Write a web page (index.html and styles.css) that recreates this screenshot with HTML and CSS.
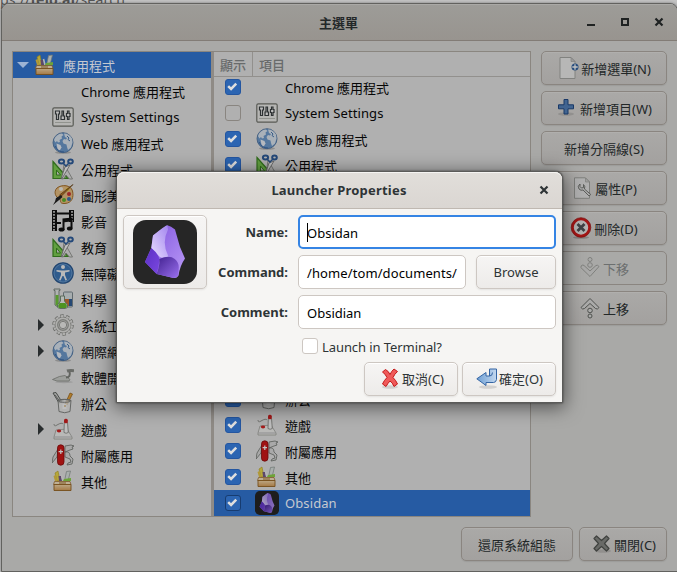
FILE: index.html
```html
<!DOCTYPE html>
<html lang="zh-Hant">
<head>
<meta charset="utf-8">
<title>主選單</title>
<link rel="stylesheet" href="styles.css">
</head>
<body>
<svg class="defs" width="0" height="0">
  <defs>
    <linearGradient id="gGlobe" x1="0" y1="0" x2="0" y2="1"><stop offset="0" stop-color="#f0f5fb"/><stop offset="1" stop-color="#5b90cc"/></linearGradient>
    <linearGradient id="gWood" x1="0" y1="0" x2="0" y2="1"><stop offset="0" stop-color="#f7dcb0"/><stop offset="1" stop-color="#d9a05a"/></linearGradient>
    <linearGradient id="gA" x1="0" y1="1" x2="1" y2="0"><stop offset="0" stop-color="#e8dcff"/><stop offset="1" stop-color="#a184ee"/></linearGradient>
    <linearGradient id="gB" x1="0" y1="0" x2="1" y2="1"><stop offset="0" stop-color="#7d50dc"/><stop offset="1" stop-color="#bb9cf7"/></linearGradient>
    <linearGradient id="gC" x1="0" y1="0" x2="1" y2="1"><stop offset="0" stop-color="#5b2fc4"/><stop offset="1" stop-color="#7a48e0"/></linearGradient>
    <linearGradient id="gD" x1="0" y1="0" x2="1" y2="1"><stop offset="0" stop-color="#41208f"/><stop offset="1" stop-color="#9a70ee"/></linearGradient>
    <linearGradient id="gRet" x1="0" y1="0" x2="1" y2="0"><stop offset="0" stop-color="#6f9fd4"/><stop offset="1" stop-color="#c3d8ef"/></linearGradient>
  </defs>
  <symbol id="toolbox" viewBox="0 0 22 22">
    <path d="M3 3l3-2 2 10H5z" fill="#f0dc4a" stroke="#b9a322" stroke-width=".6"/>
    <path d="M1.500 6l2-1 2 6H3z" fill="#e9c94a"/>
    <path d="M6.500 6h2.500l1 5H7z" fill="#7a5f8c"/><path d="M9.500 5l1.500 6" stroke="#eee" stroke-width="1.500"/>
    <path d="M14.500 1.500l4-.5-2.500 10h-3.500z" fill="#dfe6e3" stroke="#8e9a95" stroke-width=".7"/>
    <path d="M12 9l7-1v3h-8z" fill="#8fd64a"/>
    <path d="M2.500 11.500h15.500l1 3H1.500z" fill="#fae6c4" stroke="#a87632" stroke-width=".8"/>
    <path d="M2 14.500h17v6H2z" fill="url(#gWood)" stroke="#9a6624" stroke-width=".9"/>
    <path d="M7 13h7" stroke="#a87632"/>
  </symbol>
  <symbol id="settings" viewBox="0 0 22 22">
    <rect x=".8" y="1.800" width="20.400" height="18.400" rx="1.500" fill="#efefed" stroke="#74766f" stroke-width="1.200"/>
    <path d="M3 16.500h16" stroke="#bfc1bb"/>
    <g fill="#fafafa" stroke="#3d4244" stroke-width="1.200"><path d="M3.500 5h4v3h-1v5.500h-2V8h-1z"/><path d="M10 5h1.500v5h1v3.500H9V10h1z"/><path d="M15.500 5H17v2.500h1v3h-1v3h-1.500v-3h-1v-3h1z"/></g>
  </symbol>
  <symbol id="globe" viewBox="0 0 22 22">
    <ellipse cx="11" cy="20.500" rx="8" ry="1.300" fill="#000" opacity=".2"/>
    <circle cx="11" cy="10.700" r="10" fill="#6f9dd0" stroke="#5478a5" stroke-width=".9"/>
    <path d="M2 8Q4 2 10 1.500l1.500 1.500-2 1.500L10 6.500 7.500 8 8 10l-2 .5L5 9 3.500 10.500zM12 1.500q5 0 8 5l.5 4-1.500 5-3 2.500-1-3-.5-2.500-3-1L10.500 9l1.500-2 2 .5 1-1.500-2-1z" fill="#dfe9f4"/>
    <path d="M4.500 11.500l4 1.500 1 2.500-2 3.500-2-2z" fill="#eef4fb"/>
    <path d="M15 4l2 2-1 1.500 2 1.500" stroke="#4a79b2" fill="none"/><path d="M3 14q3 6 9 6" stroke="#3c6cab" fill="none"/>
  </symbol>
  <symbol id="utils" viewBox="0 0 22 22">
    <path d="M1 3.500L16 20.500H1z" fill="#7fd154" stroke="#3f8e24" stroke-width="1.200"/>
    <path d="M4.500 12l4 5h-4z" fill="#e0e0de" stroke="#3f8e24"/>
    <path d="M12 6l8.500 15h-3L14 17l-2 3.500-2 .5z" fill="#e5e5e3" stroke="#888a85" stroke-width=".8"/>
    <path d="M18 7l-8 13.500-1 .3L13 9z" fill="#fafafa" stroke="#777" stroke-width=".8"/>
    <g fill="none" stroke="#2f5f9f" stroke-width="2"><ellipse cx="9.500" cy="3.500" rx="2.600" ry="2"/><ellipse cx="18.500" cy="3.500" rx="2.300" ry="2"/></g>
    <path d="M11 5l3 3 3-3" stroke="#2f5f9f" stroke-width="1.500" fill="none"/>
  </symbol>
  <symbol id="palette" viewBox="0 0 22 22">
    <path d="M5 4c5-4 14-3 15.500 3S20 19 13 19.500s-3-4-6-5S1 8 5 4z" fill="#ecc183" stroke="#a8702a" stroke-width="1"/>
    <circle cx="9" cy="5" r="2" fill="#f5f3ec"/><circle cx="15.500" cy="5.500" r="1.800" fill="#f3d33c"/>
    <circle cx="17" cy="10" r="2" fill="#cf3434"/><circle cx="17" cy="15" r="2" fill="#3e77b6"/><circle cx="12" cy="16" r="2" fill="#60b52d"/>
    <path d="M21 .5L9 12.500 7.500 11z" fill="#bf7b28" stroke="#654111" stroke-width=".7"/>
    <path d="M9 11l1.500 2-4 3.500L1 21l2-3.500 1-3.500z" fill="#222"/>
  </symbol>
  <symbol id="film" viewBox="0 0 22 22">
    <path d="M0 0h5v21H0zM17 0h5v12h-5z" fill="#111"/>
    <path d="M2 1v21M20 1v12" stroke="#e6e6e6" stroke-width="1.600" stroke-dasharray="1.700 1.300"/>
    <path d="M5 3.500h12M5 13h4" stroke="#111" stroke-width="2"/>
    <path d="M10.500 8.500l10-1v11h-2v-7l-6 .8V20h-2z" fill="#111"/>
    <ellipse cx="9.500" cy="19.500" rx="3" ry="2" fill="#111"/><ellipse cx="17.700" cy="18.500" rx="2.800" ry="2" fill="#111"/>
  </symbol>
  <symbol id="access" viewBox="0 0 22 22">
    <circle cx="11" cy="11" r="10.200" fill="#3f79ba" stroke="#2c5b94" stroke-width="1.200"/><circle cx="11" cy="11" r="9" fill="none" stroke="#79a6d6" stroke-width=".7"/>
    <circle cx="11" cy="5" r="2" fill="#f4f4f4"/><path d="M4.500 8l5 .5h3l5-.5v1.500l-4.500 1V13l2 5-1.500.5L11.500 14h-1L8.500 18.500 7 18l2-5v-2.500l-4.500-1z" fill="#f4f4f4"/>
  </symbol>
  <symbol id="science" viewBox="0 0 22 22">
    <rect x="11.500" y="4" width="9" height="15" rx="1" fill="#dce3e6" stroke="#7f8b91"/>
    <path d="M12 11h8v7h-8z" fill="#ce7437"/><path d="M17 11h3v7h-3z" fill="#315f99"/>
    <path d="M2 1h6v1.500H7V17q-2 3-4 0V2.500H2z" fill="#e7ece9" stroke="#758078" stroke-width=".9"/>
    <path d="M3.600 7h2.900v10q-1.500 1.500-2.900 0z" fill="#74cb3d"/>
    <path d="M8.500 8h4v5l3 4q1 3-2 3.500h-6q-3-.5-2-3.500l3-4z" fill="#eff3ee" stroke="#6e8771" stroke-width=".9"/>
    <path d="M7.500 15h6l1.500 3-1 2H7l-1-2z" fill="#65c22b"/>
  </symbol>
  <symbol id="gear" viewBox="0 0 22 22">
    <circle cx="11" cy="11" r="9.300" fill="none" stroke="#82847f" stroke-width="2.800" stroke-dasharray="3.300 2.540"/>
    <circle cx="11" cy="11" r="8" fill="#e6e6e4" stroke="#8b8d88" stroke-width=".8"/>
    <circle cx="11" cy="11" r="8.900" fill="none" stroke="#e6e6e4" stroke-width="2.200" stroke-dasharray="2.500 3.090" stroke-dashoffset="-.4"/>
    <circle cx="11" cy="11" r="5.300" fill="none" stroke="#a4a6a1" stroke-width="1.400"/><circle cx="11" cy="11" r="3.700" fill="#f2f2f0" stroke="#8a8c87" stroke-width=".8"/>
  </symbol>
  <symbol id="trowel" viewBox="0 0 22 22">
    <ellipse cx="12" cy="16" rx="9" ry="1.200" fill="#000" opacity=".12"/>
    <path d="M.5 13.500Q8 9.500 13 9.500l5 4-1 1.500H5z" fill="#cfd1cd" stroke="#8c8f89" stroke-width=".8"/>
    <path d="M14 11.500q5 0 3.500-6" stroke="#80837d" stroke-width="2" fill="none"/><path d="M15 5q3-1 7-.3" stroke="#8a8d87" stroke-width="3" fill="none"/>
  </symbol>
  <symbol id="office" viewBox="0 0 22 22">
    <path d="M1 1l3-.5L10 10l-3 1z" fill="#d3d5d2" stroke="#5f6360"/><path d="M3 3l6 8" stroke="#777"/>
    <path d="M18 1l2.500 1L15 13l-2-1z" fill="#e9a43a" stroke="#945f16" stroke-width=".7"/>
    <path d="M6 8.500q7-2 13 0l-1 11q-5 2.500-11 0z" fill="#ececeb" fill-opacity=".75" stroke="#858784"/>
    <ellipse cx="12.500" cy="8.800" rx="6.300" ry="1.500" fill="none" stroke="#80827f"/>
    <rect x="10.500" y="12" width="4" height="5" fill="#fafafa"/><path d="M12 14h2" stroke="#c69b54"/>
  </symbol>
  <symbol id="joystick" viewBox="0 0 22 22">
    <path d="M4 12l11-1 5 8v2H2v-2z" fill="#f3f3f1" stroke="#a3a5a0" stroke-width=".8"/>
    <path d="M2 19h18" stroke="#bbb"/><ellipse cx="7" cy="13" rx="2.200" ry="1.400" fill="#d92424"/>
    <path d="M12.300 4.500h3.200l.8 10q-2.200 1.500-4.300 0z" fill="#fafafa" stroke="#858781" stroke-width=".8"/>
    <rect x="12" y=".8" width="3.800" height="4.500" rx="1.500" fill="#d32020"/>
    <path d="M2 6q0 3 3 1 5-3 6-1" fill="none" stroke="#8d8f8a" stroke-width=".9"/>
  </symbol>
  <symbol id="knife" viewBox="0 0 22 22">
    <path d="M6 5L1 13l-1 6 5-6zM13 2l6-1 3 1-2 1 1 2-3 1-5 2zM13 8q5-1 5 4l3 3-1 5-5 1 1-2 3-1-1-3-5-2z" fill="#dedfde" stroke="#747772" stroke-width=".8"/>
    <rect x="5.500" y=".8" width="6.500" height="20.400" rx="3.200" fill="#d31818" stroke="#8a0d0d" stroke-width=".8"/>
    <path d="M8.800 5.500v4.500M6.600 7.700h4.400" stroke="#fff" stroke-width="1.200"/>
  </symbol>
  <symbol id="obsidian" viewBox="0 0 64 64">
    <rect width="64" height="64" rx="13" fill="#262626"/>
    <path d="M34.300 5.200Q38 6 42 9.500L47 27l5 11.500q-5 7-6.500 17-2 3.500-6 2.300L24 54 12 42l6.300-14L20 15.500z" fill="url(#gB)"/>
    <path d="M34.300 5.200Q32 5.500 20 15.500L18.300 28q4 5 8.700 9 3 1.500 9 .5-8-14-1-28z" fill="url(#gA)"/>
    <path d="M18.300 28L12 42l11.500 12q3-8 2.800-15.500-2-6-8-10.500z" fill="url(#gC)"/>
    <path d="M26.300 39q10-4.500 15.500 0 4 3 4 8.500l-.5 7.800q-2 3.500-5.800 2.500L23.500 54q3.500-8 2.800-15z" fill="url(#gD)"/>
  </symbol>
  <symbol id="newdoc" viewBox="0 0 22 22">
    <path d="M3 .5h11l4 4v17H3z" fill="#f1f1f0" stroke="#aaaba7"/><path d="M14 .5v4h4z" fill="#ccc" stroke="#aaaba7" stroke-width=".7"/>
    <circle cx="18" cy="10" r="3.500" fill="#3465a4"/><path d="M18 7.300v5.400M15.300 10h5.400" stroke="#fff" stroke-width="1.300"/>
  </symbol>
  <symbol id="plus" viewBox="0 0 22 22">
    <ellipse cx="10" cy="17" rx="8" ry="1.800" fill="#000" opacity=".12"/>
    <path d="M8 2.500h4v5.300h5.500v4H12V17H8v-5.200H2.500v-4H8z" fill="#5583bd" stroke="#204a87"/>
  </symbol>
  <symbol id="props" viewBox="0 0 22 22">
    <path d="M3.500 .8h11l4 4v16.500h-15z" fill="#e8e8e7" stroke="#a6a7a3"/><path d="M14.500 1v4h4z" fill="#d2d2d0" stroke="#a6a7a3" stroke-width=".7"/>
    <path d="M9 7q-3 2-1 5 2 2 4 1l6 6 1.800-1.500L13.500 12q1-3-1-4.500v3l-2 .5-1.500-1.500z" fill="#dedfde" stroke="#6e706c" stroke-width=".9"/>
  </symbol>
  <symbol id="delete" viewBox="0 0 22 22">
    <ellipse cx="11" cy="20.500" rx="8" ry="1.300" fill="#000" opacity=".2"/>
    <circle cx="11" cy="10.500" r="8.500" fill="#ecebea" stroke="#d61c1c" stroke-width="2.600"/><circle cx="11" cy="10.500" r="9.800" fill="none" stroke="#a01010" stroke-width=".7"/>
    <path d="M7.500 7l7 7m0-7l-7 7" stroke="#53565a" stroke-width="2.800"/>
  </symbol>
  <symbol id="down" viewBox="0 0 22 22">
    <g fill="#e0e0de" stroke="#81837e"><circle cx="11" cy="2.500" r="2"/><circle cx="11" cy="8" r="2.300"/><path d="M2.500 8.500Q4 7.500 5 8.500l6 5.500 6-5.500q1.500-1 3 1L11 19.500 1.800 10.500z"/></g>
  </symbol>
  <symbol id="up" viewBox="0 0 22 22">
    <g fill="#e0e0de" stroke="#666965"><path d="M2 10.500L11 1.500l9 9q-1.500 2.500-3.500 1L11 6.500 5.500 11.500Q3.500 13 2 10.500z"/><circle cx="11" cy="13.500" r="2.300"/><circle cx="11" cy="19" r="2"/></g>
  </symbol>
  <symbol id="closex" viewBox="0 0 22 22">
    <ellipse cx="13" cy="18" rx="8" ry="1.800" fill="#000" opacity=".12"/>
    <path d="M6.500 3L11.500 7.500 16.500 3 19 5.500 14.500 10.500l4.500 5-2.500 2.500-5-4.500-5 4.500L4 15.500l4.500-5L4 5.500z" fill="#8a8c88" stroke="#555854" stroke-linejoin="round" stroke-width="1.200"/>
  </symbol>
  <symbol id="cancelx" viewBox="0 0 22 22">
    <ellipse cx="12" cy="19" rx="8" ry="1.800" fill="#000" opacity=".12"/>
    <path d="M7.500 1.500q3 1.500 4.500 5 1.500-3.500 4-5.500l3.500 2.500Q16.500 6 15 9.500q3 3 4.500 6.500l-3.500 2.500q-1.500-4-4-5.500-2 2-4 5.500L4.500 16q1.500-3.500 4.500-6.500Q7.500 6 4.500 4z" fill="#ef5a5a" stroke="#c41b1b" stroke-linejoin="round"/>
  </symbol>
  <symbol id="return" viewBox="0 0 22 22">
    <ellipse cx="13" cy="19" rx="9" ry="1.800" fill="#000" opacity=".12"/>
    <path d="M14.500 1h7v10.500q-.5 3-3 3H11v3L1.800 10.800 11 4.500v3.500h3.500z" fill="url(#gRet)" stroke="#3465a4" stroke-linejoin="round"/><path d="M14.500 8q3 0 3-3.500" fill="none" stroke="#3465a4"/>
  </symbol>
  <symbol id="check" viewBox="0 0 16 16"><path d="M2.500 7l3.300 3.200L11.700 4.200" fill="none" stroke="currentColor" stroke-width="2.900"/></symbol>
</svg>

<div class="backdrop">ps://<b>felo.ai</b>/search</div>

<main class="window">
  <header class="titlebar">
    <h1>主選單</h1>
    <svg class="controls" width="77" height="10" viewBox="0 0 77 10"><path d="M0 8h8" stroke="#1f2222" stroke-width="2"/><path d="M35 2h6v6h-6z" fill="none" stroke="#1f2222" stroke-width="2"/><path d="M68.500 1.500l7 7m0-7l-7 7" stroke="#1f2222" stroke-width="2.200"/></svg>
  </header>
  <div class="content">
    <div class="panes">
      <ul class="tree">
        <li class="root selected"><i class="open"></i><svg class="icon"><use href="#toolbox"/></svg><span>應用程式</span></li>
        <li><i></i><svg class="icon"></svg><span>Chrome 應用程式</span></li>
        <li><i></i><svg class="icon"><use href="#settings"/></svg><span class="latin">System Settings</span></li>
        <li><i></i><svg class="icon"><use href="#globe"/></svg><span>Web 應用程式</span></li>
        <li><i></i><svg class="icon"><use href="#utils"/></svg><span>公用程式</span></li>
        <li><i></i><svg class="icon"><use href="#palette"/></svg><span>圖形美術</span></li>
        <li><i></i><svg class="icon"><use href="#film"/></svg><span>影音</span></li>
        <li><i></i><svg class="icon"><use href="#utils"/></svg><span>教育</span></li>
        <li><i></i><svg class="icon"><use href="#access"/></svg><span>無障礙</span></li>
        <li><i></i><svg class="icon"><use href="#science"/></svg><span>科學</span></li>
        <li><i class="closed"></i><svg class="icon"><use href="#gear"/></svg><span>系統工具</span></li>
        <li><i class="closed"></i><svg class="icon"><use href="#globe"/></svg><span>網際網路</span></li>
        <li><i></i><svg class="icon"><use href="#trowel"/></svg><span>軟體開發</span></li>
        <li><i></i><svg class="icon"><use href="#office"/></svg><span>辦公</span></li>
        <li><i class="closed"></i><svg class="icon"><use href="#joystick"/></svg><span>遊戲</span></li>
        <li><i></i><svg class="icon"><use href="#knife"/></svg><span>附屬應用</span></li>
        <li><i></i><svg class="icon"><use href="#toolbox"/></svg><span>其他</span></li>
      </ul>
      <div class="items">
        <div class="columns"><span>顯示</span><span>項目</span></div>
        <ul>
          <li><svg class="box on"><use href="#check"/></svg><svg class="icon"></svg><span>Chrome 應用程式</span></li>
          <li><svg class="box"></svg><svg class="icon"><use href="#settings"/></svg><span class="latin">System Settings</span></li>
          <li><svg class="box on"><use href="#check"/></svg><svg class="icon"><use href="#globe"/></svg><span>Web 應用程式</span></li>
          <li><svg class="box on"><use href="#check"/></svg><svg class="icon"><use href="#utils"/></svg><span>公用程式</span></li>
          <li></li><li></li><li></li><li></li><li></li><li></li><li></li><li></li>
          <li><svg class="box on"><use href="#check"/></svg><svg class="icon"><use href="#office"/></svg><span>辦公</span></li>
          <li><svg class="box on"><use href="#check"/></svg><svg class="icon"><use href="#joystick"/></svg><span>遊戲</span></li>
          <li><svg class="box on"><use href="#check"/></svg><svg class="icon"><use href="#knife"/></svg><span>附屬應用</span></li>
          <li><svg class="box on"><use href="#check"/></svg><svg class="icon"><use href="#toolbox"/></svg><span>其他</span></li>
          <li class="selected"><svg class="box on"><use href="#check"/></svg><svg class="icon large"><use href="#obsidian"/></svg><span class="latin">Obsidan</span></li>
        </ul>
      </div>
    </div>
    <div class="actions">
      <button><svg class="icon"><use href="#newdoc"/></svg><span>新增選單(N)</span></button>
      <button><svg class="icon"><use href="#plus"/></svg><span>新增項目(W)</span></button>
      <button><span>新增分隔線(S)</span></button>
      <button><svg class="icon"><use href="#props"/></svg><span>屬性(P)</span></button>
      <button><svg class="icon"><use href="#delete"/></svg><span>刪除(D)</span></button>
      <button disabled><svg class="icon"><use href="#down"/></svg><span>下移</span></button>
      <button><svg class="icon"><use href="#up"/></svg><span>上移</span></button>
    </div>
  </div>
  <footer>
    <button class="restore"><span>還原系統組態</span></button>
    <button class="close"><svg class="icon"><use href="#closex"/></svg><span>關閉(C)</span></button>
  </footer>
</main>

<section class="dialog">
  <header><h2>Launcher Properties</h2><svg class="dismiss" width="10" height="10" viewBox="0 0 10 10"><path d="M1.500 1.500l7 7m0-7l-7 7" stroke="#2e3436" stroke-width="2.200"/></svg></header>
  <div class="form">
    <button class="launcher"><svg width="64" height="64"><use href="#obsidian"/></svg></button>
    <div class="fields">
      <div class="field"><label>Name:</label><div class="input focus"><i class="caret"></i>Obsidan</div></div>
      <div class="field"><label>Command:</label><div class="input path">/home/tom/documents/</div><button class="browse"><span class="latin">Browse</span></button></div>
      <div class="field"><label>Comment:</label><div class="input">Obsidian</div></div>
    </div>
  </div>
  <div class="terminal"><i class="tick"></i><span>Launch in Terminal?</span></div>
  <div class="confirm">
    <button><svg class="icon"><use href="#cancelx"/></svg><span>取消(C)</span></button>
    <button><svg class="icon"><use href="#return"/></svg><span>確定(O)</span></button>
  </div>
</section>
</body>
</html>
```
FILE: styles.css
```css
* { box-sizing: border-box; }
body {
  margin: 0;
  width: 677px;
  height: 572px;
  overflow: hidden;
  position: relative;
  background: #c3c3c3;
  font: 13px/20px "Noto Sans", "Noto Sans CJK TC", sans-serif;
  color: #060606;
}
ul { list-style: none; margin: 0; padding: 0; }
h1, h2 { margin: 0; font-size: 13px; font-weight: 700; }
li span, button span { padding-top: 2px; }
li span.latin { padding-top: 0; letter-spacing: .1px; }
button span.latin { padding-top: 0; }
.defs { position: absolute; }
.icon { width: 22px; height: 22px; flex: none; }
.backdrop {
  height: 3px;
  line-height: 0;
  font-size: 14px;
  letter-spacing: .2px;
  color: #555;
  white-space: nowrap;
}

.window {
  position: absolute;
  left: 1px;
  top: 3px;
  width: 677px;
  height: 569px;
  border: 1px solid #62625f;
  border-radius: 8px 8px 0 0;
  background: #a9a9a7;
  box-shadow: 0 0 3px rgba(0, 0, 0, .4);
  overflow: hidden;
}
.window .icon { filter: brightness(.76); }
.titlebar {
  height: 37px;
  display: flex;
  align-items: center;
  justify-content: center;
  position: relative;
  background: linear-gradient(#9d9c98, #98948f);
  border-bottom: 1px solid #827c76;
  box-shadow: inset 0 1px #aaa9a6;
}
.titlebar h1 { color: #242829; padding: 2px 2px 0 0; }
.controls { position: absolute; left: 585px; top: 13px; }
.content { display: flex; padding: 10px 0 0 10px; gap: 10px; }
.panes {
  display: flex;
  width: 519px;
  height: 466px;
  border: 1px solid #8a8680;
  background: #8f8b86;
  gap: 3px;
}
.tree { width: 198px; background: #b0b0b0; }
.tree li, .items li { height: 26px; display: flex; align-items: center; white-space: nowrap; }
.tree li i { width: 14px; height: 12px; margin: 0 1px 0 24px; flex: none; }
.tree li .icon { margin-right: 7px; }
.tree .root i { margin: 0 3px 0 4px; }
.tree i.open::before {
  content: "";
  display: block;
  margin-top: 3px;
  width: 0;
  border: 6px solid transparent;
  border-top-color: #9cb3d4;
  border-bottom: 0;
}
.tree i.closed::before {
  content: "";
  display: block;
  width: 0;
  margin-left: 1px;
  border: 6px solid transparent;
  border-left-color: #292d2e;
  border-right: 0;
}
.selected { background: #265ba3; color: #c5c9d0; }
.items { width: 316px; background: #b0b0b0; overflow: hidden; }
.columns {
  position: relative;
  height: 25px;
  display: flex;
  background: #b0b0b0;
  border-bottom: 1px solid #92908d;
  color: #686b6b;
  font-weight: 500;
  white-space: nowrap;
}
.columns span { padding: 3px 0 0 6px; }
.columns span:first-child { width: 39px; border-right: 1px solid #92908d; }
.items ul { margin-top: -3px; }
.box {
  width: 16px;
  height: 16px;
  margin: 0 15px 0 11px;
  border: 1px solid #898580;
  border-radius: 3px;
  flex: none;
  color: #dedede;
}
.box.on { background: #2c65b2; border-color: #2456a0; }
.selected .box.on { border-color: #173c70; }
.items li .icon { margin: 0 7px 0 0; }
.items li .icon.large { width: 24px; height: 24px; margin: 0 6px 0 -1px; }

button {
  font: inherit;
  height: 34px;
  padding: 0;
  display: flex;
  align-items: center;
  justify-content: center;
  gap: 2px;
  border: 1px solid #8a8580;
  border-radius: 5px;
  background: linear-gradient(#aaa9a7, #a3a19f);
  color: #222728;
  box-shadow: 0 1px 1px rgba(0, 0, 0, .08), inset 0 1px #b0afad;
  white-space: nowrap;
}
.actions { display: flex; flex-direction: column; gap: 6px; width: 126px; }
button:disabled { background: #a9a9a7; color: #6c6f6f; box-shadow: none; }
button:disabled .icon { opacity: .6; }
footer { display: flex; gap: 6px; padding: 10px 10px 0 459px; }
.restore { width: 112px; }
.close { width: 88px; }

.dialog {
  position: absolute;
  left: 116px;
  top: 171px;
  width: 447px;
  height: 232px;
  border: 1px solid #5b5b59;
  border-radius: 8px 8px 0 0;
  background: #f6f5f3;
  box-shadow: 0 3px 18px 2px rgba(0, 0, 0, .5), 0 0 2px rgba(0, 0, 0, .6);
}
.dialog header {
  height: 37px;
  position: relative;
  display: flex;
  align-items: center;
  justify-content: center;
  border-bottom: 1px solid #bfb8b1;
  border-radius: 7px 7px 0 0;
  background: linear-gradient(#e1deda, #dad6d2);
  box-shadow: inset 0 1px #f5f4f2;
  color: #2e3436;
}
.dialog h2 { letter-spacing: .2px; padding-right: 1px; }
.dismiss { position: absolute; left: 422px; top: 13px; }
.dialog button {
  border-color: #cdc7c2;
  background: linear-gradient(#f6f5f4, #edebe9);
  color: #2e3436;
  box-shadow: 0 1px 2px rgba(0, 0, 0, .08), inset 0 1px #fff;
}
.form { display: flex; padding: 6px 6px 0; gap: 8px; }
.dialog .launcher { width: 84px; height: 74px; flex: none; }
.fields { flex: 1; display: flex; flex-direction: column; gap: 6px; }
.field { display: flex; }
.field label { width: 73px; margin-right: 10px; text-align: right; font-weight: 700; line-height: 35px; height: 34px; color: #2e3436; }
.input {
  position: relative;
  flex: 1;
  height: 34px;
  border: 1px solid #cdc7c2;
  border-radius: 5px;
  background: #fff;
  padding: 0 8px;
  line-height: 34px;
  color: #000;
  white-space: nowrap;
}
.input.path { letter-spacing: .1px; }
.input.focus { border: 2px solid #3584e4; padding: 0 7px; line-height: 32px; }
.caret { position: absolute; left: 7px; top: 6px; width: 1px; height: 19px; background: #000; }
.dialog .browse { width: 80px; margin-left: 10px; }
.terminal { display: flex; align-items: center; gap: 4px; margin: 8px 0 0 185px; height: 18px; color: #2e3436; }
.terminal span { padding-top: 2px; letter-spacing: -.08px; }
.tick { width: 16px; height: 16px; border: 1px solid #cdc7c2; border-radius: 3px; background: #fff; }
.confirm { display: flex; justify-content: flex-end; gap: 4px; padding: 7px 6px 0; }
.confirm button { width: 94px; }
.confirm span { padding-top: 0; }
```
